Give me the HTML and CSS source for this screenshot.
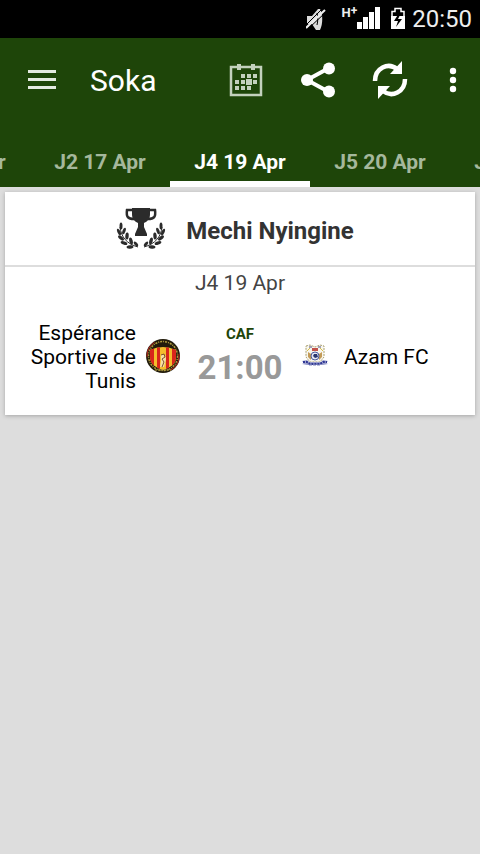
FILE: index.html
```html
<!DOCTYPE html>
<html lang="sw">
<head>
    <meta charset="UTF-8">
    <meta name="viewport" content="width=device-width, initial-scale=1.0">
    <title>Soka</title>
    <link rel="stylesheet" href="styles.css">
</head>
<body>
    <div class="status-bar">
        <svg class="status-mute" width="22" height="24" viewBox="0 0 22 24">
            <path d="M1 9h5l6-7h2c3 5 3 15 0 21h-4l-4-6H1z" fill="#ddd"/>
            <path d="M11 6c1 4 1 8 0 12" stroke="#000" stroke-width="1" fill="none"/>
            <path d="M0 18L17 1" stroke="#000" stroke-width="1"/>
            <path d="M0 21L19 3" stroke="#eee" stroke-width="2"/>
            <path d="M2 22L20 5" stroke="#000" stroke-width="1"/>
        </svg>
        <span class="status-network">H<sup>+</sup></span>
        <svg class="status-signal" width="24" height="24" viewBox="0 0 24 24" fill="#fff">
            <path d="M0 15h5v7H0zM6 10h5v12H6zM12 5h5v17h-5zM18 0h5v22h-5z"/>
        </svg>
        <svg class="status-battery" width="14" height="24" viewBox="0 0 14 24">
            <path d="M4 1.500h6v3h3V11H1V4.500h3z" fill="#000" stroke="#fff" stroke-width="1.500"/>
            <path d="M0 9h14v13H0z" fill="#fff"/>
            <path d="M8 6l-5 8h4l-2 6 6-8H7l3-6z" fill="#000"/>
        </svg>
        <span class="status-time">20:50</span>
    </div>

    <header>
        <div class="toolbar">
            <button class="menu" aria-label="Menu">
                <svg width="28" height="20" viewBox="0 0 28 20" fill="#e4eae1">
                    <path d="M0 0h28v3H0zM0 8h28v3H0zM0 16h28v3H0z"/>
                </svg>
            </button>
            <h1>Soka</h1>
            <button class="action" aria-label="Calendar">
                <svg width="36" height="36" viewBox="0 0 36 36" fill="#c3d1bd">
                    <path d="M3 5h30v28H3z" fill="none" stroke="#c3d1bd" stroke-width="2.500"/>
                    <path d="M9 2h4v6H9zM23 2h4v6h-4z"/>
                    <path d="M13 12h4v4h-4zM19 12h4v4h-4zM25 12h4v4h-4zM7 18h4v4H7zM13 18h4v4h-4zM18 17h6v6h-6zM25 18h4v4h-4zM7 24h4v4H7zM13 24h4v4h-4zM19 24h4v4h-4z"/>
                </svg>
            </button>
            <button class="action" aria-label="Share">
                <svg width="36" height="36" viewBox="0 0 36 36" fill="#fff">
                    <path d="M29 6L7 18l22 12" fill="none" stroke="#fff" stroke-width="4"/>
                    <circle cx="7" cy="18" r="6"/>
                    <circle cx="29" cy="6.500" r="6"/>
                    <circle cx="29" cy="29.500" r="6"/>
                </svg>
            </button>
            <button class="action" aria-label="Refresh">
                <svg width="36" height="38" viewBox="0 0 36 38">
                    <path d="M3 20C3 7 16 1 25 8M33 18C33 31 20 37 11 30" fill="none" stroke="#fff" stroke-width="4.500"/>
                    <path d="M30 0v13H18zM6 38V25h12z" fill="#fff"/>
                </svg>
            </button>
            <button class="more" aria-label="More">
                <svg width="8" height="26" viewBox="0 0 8 26" fill="#fff">
                    <circle cx="4" cy="4" r="3.200"/>
                    <circle cx="4" cy="13" r="3.200"/>
                    <circle cx="4" cy="22" r="3.200"/>
                </svg>
            </button>
        </div>
        <nav class="tabs">
            <a href="#">J1 16 Apr</a>
            <a href="#">J2 17 Apr</a>
            <a href="#" class="active">J4 19 Apr</a>
            <a href="#">J5 20 Apr</a>
            <a href="#">J6 21 Apr</a>
        </nav>
    </header>

    <main>
        <section class="card">
            <div class="league">
                <svg width="50" height="44" viewBox="0 0 50 44" fill="#2b2b2b">
                    <defs>
                        <g id="branch">
                            <path d="M4 20c1 10 7 17 18 20" fill="none" stroke="#2b2b2b" stroke-width="1"/>
                            <ellipse cx="5" cy="19" rx="1.500" ry="3.500"/>
                            <ellipse cx="3" cy="25" rx="1.500" ry="3.500" transform="rotate(-25 3 25)"/>
                            <ellipse cx="8" cy="24" rx="1.500" ry="3.500" transform="rotate(20 8 24)"/>
                            <ellipse cx="5" cy="31" rx="1.700" ry="3.500" transform="rotate(-50 5 31)"/>
                            <ellipse cx="11" cy="29" rx="1.700" ry="3.500" transform="rotate(5 11 29)"/>
                            <ellipse cx="8" cy="36" rx="1.700" ry="3.500" transform="rotate(-70 8 36)"/>
                            <ellipse cx="15" cy="34" rx="1.700" ry="3.500" transform="rotate(-15 15 34)"/>
                            <ellipse cx="14" cy="40" rx="1.700" ry="3.500" transform="rotate(-95 14 40)"/>
                            <ellipse cx="20" cy="37" rx="1.500" ry="3" transform="rotate(-40 20 37)"/>
                        </g>
                    </defs>
                    <use href="#branch"/>
                    <use href="#branch" transform="translate(50 0) scale(-1 1)"/>
                    <path d="M17 3h-6c-1 7 1 9 7 9M33 3h6c1 7-1 9-7 9" fill="none" stroke="#2b2b2b" stroke-width="2.500"/>
                    <path d="M16 1h18v6c0 5-2 7-6 9v4l3 7v2H19v-2l3-7v-4c-4-2-6-4-6-9z"/>
                </svg>
                <h2>Mechi Nyingine</h2>
            </div>
            <p class="round">J4 19 Apr</p>
            <div class="match">
                <span class="team home">Espérance Sportive de Tunis</span>
                <svg width="34" height="36" viewBox="0 0 34 36">
                    <circle cx="17" cy="17" r="17" fill="#211b0b"/>
                    <circle cx="17" cy="17" r="14.500" fill="none" stroke="#ae9a3e" stroke-width="1.500" stroke-dasharray="2 1 1 1"/>
                    <circle cx="17" cy="17" r="16" fill="none" stroke="#bd2721" stroke-width="1" stroke-dasharray="17 32"/>
                    <clipPath id="shield">
                        <path d="M4 11Q17 5 30 11v7c0 7-6 11-13 13C10 29 4 25 4 18z"/>
                    </clipPath>
                    <g clip-path="url(#shield)">
                        <path d="M4 6h26v25H4z" fill="#f4bd2d"/>
                        <path d="M4 6h4v25H4zM11 6h3v25h-3zM20 6h3v25h-3zM26 6h4v25h-4z" fill="#d8251c"/>
                    </g>
                    <path d="M15 16h4l1 4-2 8h-4l1-6z" fill="#f6dfa6"/>
                    <path d="M15 16l3-1 1 3-3 2 2 3-2 5" fill="none" stroke="#7a5331" stroke-width="1"/>
                    <path d="M9 31h16" stroke="#c0a743" stroke-width="1" stroke-dasharray="2 1"/>
                </svg>
                <div class="kickoff">
                    <span class="competition">CAF</span>
                    <span class="time">21:00</span>
                </div>
                <svg width="34" height="36" viewBox="0 0 34 36">
                    <path d="M6 7l4-1 5 2 5-2 4 1v11l-4 5H10l-4-5z" fill="#f8f6ee" stroke="#aaa071" stroke-width="1" stroke-dasharray="2 1"/>
                    <path d="M7 12l3-3M23 12l-3-3" stroke="#d9bf45" stroke-width="1"/>
                    <path d="M9 8h3M18 8h3" stroke="#4a4a83" stroke-width="1"/>
                    <path d="M12 9h6v3h-6z" fill="#c2514b"/>
                    <path d="M8 13l3 2v6l-3-3zM22 13l-3 2v6l3-3z" fill="#c39a56"/>
                    <circle cx="15" cy="17" r="4" fill="#e4e7f3" stroke="#4c5aa0" stroke-width="1"/>
                    <path d="M14 15h3l1 3-3 1-2-2z" fill="#29356f"/>
                    <path d="M2 22l5-1 2 2h12l2-2 5 1-2 2 2 1-5 1H7l-5-1 2-1z" fill="#9ca0cd"/>
                    <path d="M3 23h4l3 2h10l3-2h4" fill="none" stroke="#303894" stroke-width="2" stroke-dasharray="2 1"/>
                    <path d="M9 26h12" stroke="#7b80b8" stroke-width="1" stroke-dasharray="3 1"/>
                </svg>
                <span class="team">Azam FC</span>
            </div>
        </section>
    </main>
</body>
</html>
```
FILE: styles.css
```css
* {
    box-sizing: border-box;
}
body {
    margin: 0;
    min-height: 100vh;
    background-color: #ddd;
    font-family: Roboto, sans-serif;
    color: #000;
}
svg {
    display: block;
    flex-shrink: 0;
}
h1, h2, p {
    margin: 0;
}
button {
    padding: 0;
    border: none;
    background: none;
    display: flex;
    align-items: center;
    justify-content: center;
    cursor: pointer;
}

/* status bar */
.status-bar {
    display: flex;
    align-items: center;
    justify-content: flex-end;
    height: 38px;
    padding-right: 8px;
    background-color: #000;
    color: #eee;
}
.status-mute {
    margin-right: 14px;
}
.status-network {
    align-self: flex-start;
    padding-top: 5px;
    font-size: 13px;
    line-height: 14px;
    font-weight: bold;
}
.status-network sup {
    font-size: 12px;
    line-height: 1;
    vertical-align: 2px;
}
.status-signal {
    margin-right: 10px;
}
.status-battery {
    margin-right: 7px;
}
.status-time {
    font-size: 24px;
    line-height: 38px;
}

/* header */
header {
    background-color: #1e4509;
    color: #fff;
}
.toolbar {
    display: flex;
    align-items: center;
    height: 84px;
    padding: 0 16px 0 28px;
}
.menu {
    width: 28px;
    height: 48px;
}
h1 {
    flex: 1;
    padding: 2px 0 0 34px;
    font-size: 30px;
    line-height: 36px;
    font-weight: normal;
}
.action {
    width: 72px;
    height: 72px;
}
.more {
    width: 38px;
    height: 72px;
    padding-left: 16px;
}
.tabs {
    display: flex;
    justify-content: center;
    height: 65px;
    overflow: hidden;
}
.tabs a {
    flex: 0 0 140px;
    padding-top: 16px;
    border-bottom: 6px solid transparent;
    color: #a5b89c;
    font-size: 21px;
    line-height: 48px;
    font-weight: bold;
    text-align: center;
    text-decoration: none;
}
.tabs .active {
    border-color: #fff;
    color: #fff;
}

/* fixtures */
main {
    padding: 5px;
}
.card {
    background-color: #fff;
    box-shadow: 0 1px 4px rgba(0, 0, 0, 0.25);
}
.league {
    display: flex;
    align-items: center;
    justify-content: center;
    gap: 20px;
    height: 75px;
    padding-right: 10px;
    border-bottom: 2px solid #ddd;
}
h2 {
    padding-top: 4px;
    color: #333;
    font-size: 24px;
    line-height: 28px;
}
.round {
    padding-top: 4px;
    color: #444;
    font-size: 21px;
    line-height: 24px;
    text-align: center;
}
.match {
    display: grid;
    grid-template-columns: 1fr 34px 100px 34px 1fr;
    align-items: center;
    gap: 10px;
    padding: 26px 20px 22px;
}
.team {
    font-size: 21px;
    line-height: 24px;
}
.home {
    text-align: right;
}
.kickoff {
    display: flex;
    flex-direction: column;
    align-items: center;
    font-weight: bold;
}
.competition {
    color: #1e4509;
    font-size: 15px;
    line-height: 22px;
}
.time {
    color: #999;
    font-size: 33px;
    line-height: 46px;
}
```
